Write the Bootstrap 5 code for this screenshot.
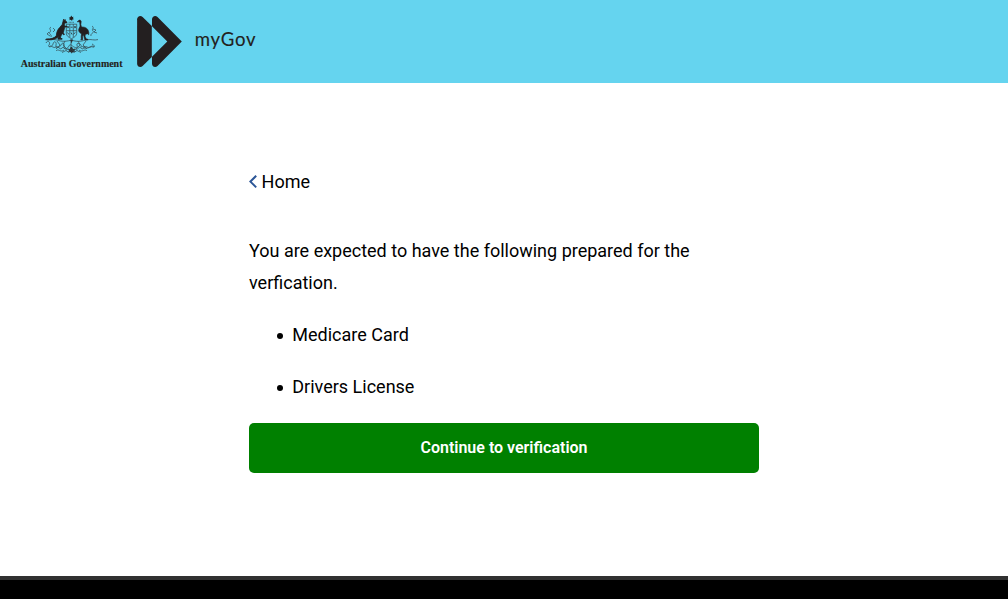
<!DOCTYPE html>
<html lang="en">
<head>
<meta charset="utf-8">
<meta name="viewport" content="width=device-width, initial-scale=1">
<title>Home</title>
<link href="https://cdn.jsdelivr.net/npm/bootstrap@5.3.0/dist/css/bootstrap.min.css" rel="stylesheet">
<style>
body{font-family:Roboto,sans-serif;font-size:18px;line-height:32px;color:#000;height:599px;overflow:hidden}
.top-bar{background:#65d4ef;height:83px}
.page-body{width:510px;padding-top:83px}
.home-link{color:#000;gap:3.6px}
.intro{margin-top:37px;margin-bottom:20px}
.needs{padding-left:28px}
.needs li{margin-bottom:20px;gap:9.3px}
.needs li::before{content:"";width:6px;height:6px;border-radius:50%;background:#000;margin-top:1px}
.btn-go{background:green;color:#fff;height:50px;border-radius:5px;font-size:16px;font-weight:600;border:0;--bs-btn-hover-bg:green}
.foot{height:23px;background:#000;border-top:4px solid #313131}
</style>
</head>
<body class="d-flex flex-column">
<header class="top-bar flex-shrink-0">
<svg class="d-block" width="270" height="83" viewBox="0 0 270 83" fill="#231f20">
  <!-- coat of arms -->
  <path d="M71.4 15.6l.7 1.4 1.5-.3-.7 1.4 1 1.2-1.5.2-.4 1.4-1.1-1.1-1.5.4.4-1.4-1-1.1 1.5-.4z"/>
  <path d="M68.7 22.3h5.6" stroke="#231f20" stroke-width=".8" stroke-dasharray="1 .4" opacity=".7"/>
  <path d="M63.6 19.2l1 1.3.5-1 .3 1.6 1.6 1-.3.8-2 .1-.5 2.2 1.5 1.1 1.2-.2-.2.8-2 .2-.7 3-.7 2.7 1.1 1.6-.5.6-1.8-1.6-1.2 2.7-.6 2.2 1.8.3v.6h-4.2l.4-2.6c-1.4 1.8-4 2.9-7 3.1l-5-.2v-.6c4.3.2 8.4-.6 10-3.3.4-4 1.6-6.4 3.6-8.3l2.3-2.8.8-3z" stroke="#231f20" stroke-width=".8"/>
  <path d="M77.2 21.8l1.3-1 .5-.7 1.5.2.7 1.2-.4 3 .7 2.4 2.7.3c2.5.6 4.2 2.2 4.6 5.3l-.1 2.3-1.3-1.1-2.2.9-.1 2 1.2 2.3 1.6.4v.6h-3l-1-3.3-.5-2-.9 2 .2 3.2h-1.9l.5-1-.1-2.7.4-2.2c-2.5-1.3-3.4-3-2.8-4.8l1.3-3-.4-3.9-1-.4z" stroke="#231f20" stroke-width=".6"/>
  <g fill="none" stroke="#231f20" stroke-width=".75" opacity=".75">
    <path d="M66.3 24.2h10.4v9c0 2.7-2.4 4.2-5.2 5.4-2.8-1.2-5.2-2.7-5.2-5.4zM66.3 30.7h10.4M69.8 24.2v13.1M73.3 24.2v13.1"/>
    <path d="M67.2 26.2l1.7 2m0-2l-1.7 2m3.4-1h2m1.6-1l1.7 2m0-2l-1.7 2m-7 4.4l1.8 1.7m2-1.8l1 2m1.4-.4l2-1.5" stroke-width="1"/>
    <path d="M45 39.6c4 1.2 7-.8 11 .2 4 1 7 2.6 15.5.3 7 2.5 11 .6 15.5-.3 4-1 7 1 11-.2"/>
    <path d="M51 27c-3 2 1 3-1 5s2 2 1 5m2-9l2 2-2 2m-4 0l-2 2 3 2m42-10c3 2-1 3 1 5s-3 2-2 5m2-7l3 1-2 2 3 1"/>
    <path d="M46 43c2-4 5 0 3 2s3 3 4-1 4-2 3 1 3 4 5 0 4-1 3 2 4 2 5-1 3 0 5 1 4 1 3-2 5-1 4 1 5-1 3 1 4 1 4 1 3-2 5-1 2-2-1-3M49 47c2-3 4 2 7 0s3 4 6 1 3 4 6 1M94 47c-2-3-4 2-7 0s-3 4-6 1-3 4-6 1"/>
    <path d="M56 51c2-3 5 2 8-1M87 51c-2-3-5 2-8-1M62 52.5l4-2 3 2 2-2 3 2 3-2 4 2"/>
    <path d="M57 41l3 4-4 4m9-8l-2 4 4 4m19-8l-3 4 4 4m-9-8l2 4-4 4m-5-9v9"/>
  </g>
  <path d="M67.6 48.4l2.3.7.8-2.1h1.4l1 2.1 2.4-.7-1 2.2 1 1-2.5.3-1.3 1.6-1.3-1.6-2.4-.3 1-1zM70.2 39.5h2.8l-1.4 4z" opacity=".85"/>
  <text x="20.8" y="67" font-family="'Liberation Serif',serif" font-weight="700" font-size="11" textLength="101.7" lengthAdjust="spacingAndGlyphs" stroke="#231f20" stroke-width=".15">Australian Government</text>
  <!-- double chevron -->
  <path d="M137.1 19.2c0-3 3.4-4.3 5.5-2.3l9.2 9.2v31l-9.2 9c-2.1 2-5.5.7-5.5-2.3z"/>
  <path d="M152 19.2c0-3 3.4-4.3 5.5-2.3L181.8 41.4 157.5 66.1c-2.1 2-5.5.7-5.5-2.3v-7.1l15.3-15.3L152 26.2z"/>
  <text x="194.8" y="45.8" font-family="Lato,sans-serif" font-size="18.6" textLength="60.8" lengthAdjust="spacing" stroke="#231f20" stroke-width=".12">myGov</text>
</svg>
</header>
<main class="page-body mx-auto flex-grow-1">
  <a href="#" class="home-link d-flex align-items-center text-decoration-none">
    <svg width="9" height="14" viewBox="0 0 9 14" fill="none" stroke="#2c5697" stroke-width="2"><path d="M7.2 .8L1.4 6.6l5.8 5.8"/></svg>
    <span>Home</span>
  </a>
  <p class="intro">You are expected to have the following prepared for the verfication.</p>
  <ul class="needs list-unstyled mb-0">
    <li class="d-flex align-items-center">Medicare Card</li>
    <li class="d-flex align-items-center">Drivers License</li>
  </ul>
  <button type="button" class="btn btn-go w-100">Continue to verification</button>
</main>
<footer class="foot flex-shrink-0"></footer>
<script src="https://cdn.jsdelivr.net/npm/bootstrap@5.3.0/dist/js/bootstrap.bundle.min.js"></script>
</body>
</html>
